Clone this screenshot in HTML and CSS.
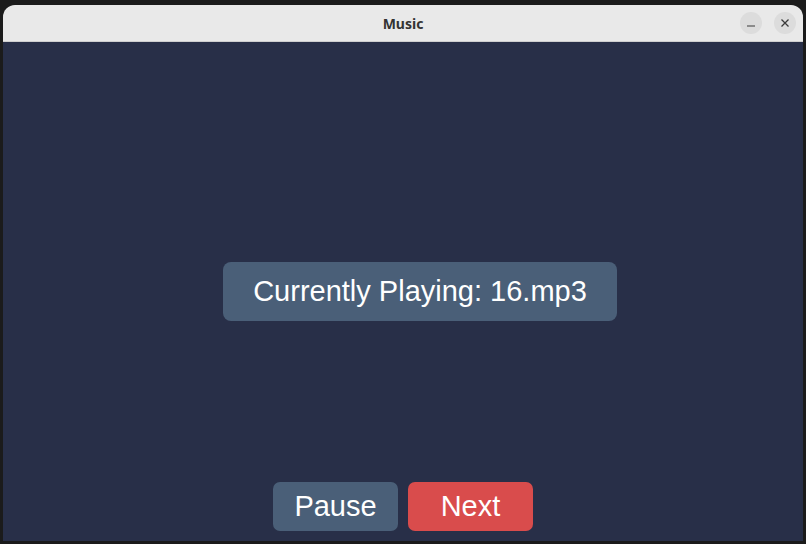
FILE: index.html
```html
<!DOCTYPE html>
<html lang="en">
<head>
<meta charset="utf-8">
<title>Music</title>
<link rel="stylesheet" href="styles.css">
</head>
<body>
<div class="window">
  <header class="titlebar">
    <span class="title">Music</span>
    <div class="controls">
      <span class="ctrl">
        <svg width="10" height="10" viewBox="0 0 10 10"><path d="M1 8h8" stroke="#3a3a3a" stroke-width="1.2"/></svg>
      </span>
      <span class="ctrl">
        <svg width="10" height="10" viewBox="0 0 10 10"><path d="M1.5 1.5l7 7M8.5 1.5l-7 7" stroke="#3a3a3a" stroke-width="1.3"/></svg>
      </span>
    </div>
  </header>
  <main class="content">
    <div class="spacer"></div>
    <div class="now-playing">Currently Playing: 16.mp3</div>
    <div class="buttons">
      <button class="btn pause">Pause</button>
      <button class="btn next">Next</button>
    </div>
  </main>
</div>
</body>
</html>
```
FILE: styles.css
```css
html, body {
  margin: 0;
  padding: 0;
  background: #1b1b1b;
  width: 806px;
  height: 544px;
  overflow: hidden;
}
.window {
  margin: 5px 0 0 3px;
  width: 800px;
  height: 536px;
  display: flex;
  flex-direction: column;
  border-radius: 12px 12px 0 0;
  overflow: hidden;
}
.titlebar {
  height: 36px;
  flex: none;
  background: #e9e9e9;
  border-bottom: 1px solid #cfcfcf;
  display: flex;
  align-items: center;
  justify-content: center;
  position: relative;
}
.title {
  font-family: "Noto Sans", "DejaVu Sans", sans-serif;
  font-weight: 700;
  font-size: 14px;
  color: #333;
}
.controls {
  position: absolute;
  right: 7px;
  top: 7px;
  display: flex;
  gap: 12px;
}
.ctrl {
  width: 22px;
  height: 22px;
  border-radius: 50%;
  background: #dcdcdc;
  display: flex;
  align-items: center;
  justify-content: center;
}
.content {
  flex: 1;
  background: #282f48;
  display: grid;
  grid-template-rows: 1fr auto 1fr;
  justify-items: center;
  font-family: "Liberation Sans", Arial, sans-serif;
}
.now-playing {
  background: #4a5f78;
  color: #fff;
  font-size: 29px;
  margin-left: 34px;
  height: 59px;
  line-height: 59px;
  border-radius: 8px;
  box-sizing: border-box;
  width: 394px;
  text-align: center;
}
.buttons {
  align-self: end;
  display: flex;
  gap: 10px;
  padding-bottom: 10px;
}
.btn {
  width: 125px;
  height: 49px;
  border: none;
  border-radius: 7px;
  color: #fff;
  font-family: "Liberation Sans", Arial, sans-serif;
  font-size: 29px;
  padding: 0;
  cursor: pointer;
}
.pause { background: #4a5f78; }
.next { background: #d94c4c; }
```
